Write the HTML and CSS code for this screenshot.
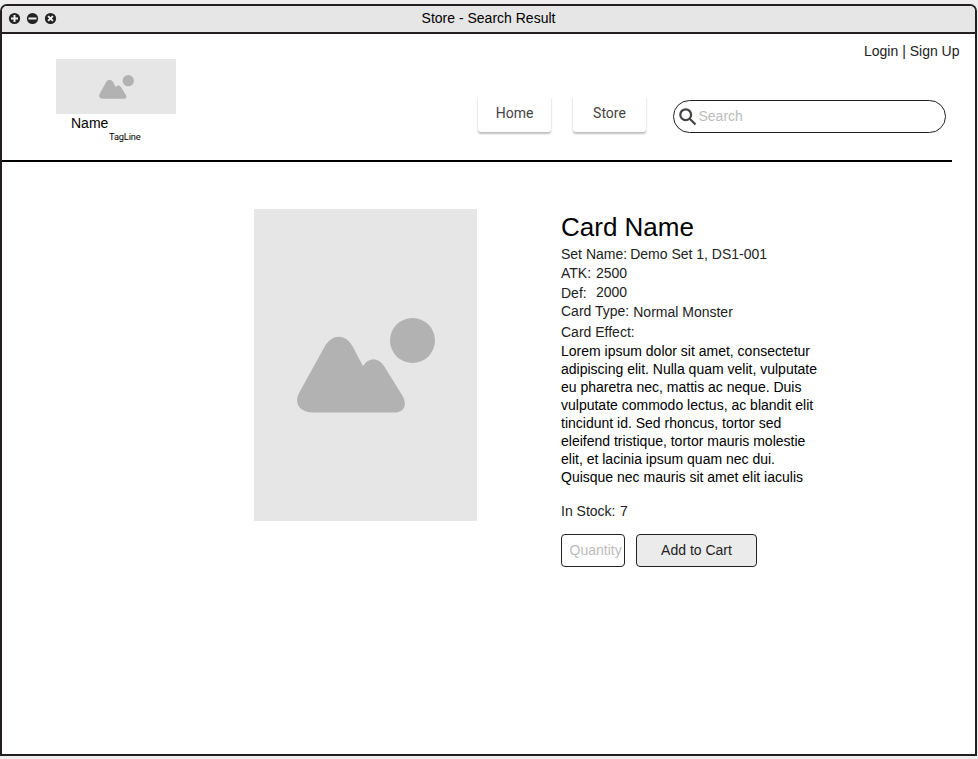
FILE: index.html
```
<!DOCTYPE html>
<html lang="en">
<head>
<meta charset="utf-8">
<title>Store - Search Result</title>
<link rel="stylesheet" href="styles.css">
</head>
<body>
<svg width="0" height="0" class="defs" aria-hidden="true">
  <symbol id="picture" viewBox="0 0 138 95">
    <path d="M28 28C36 15 49 16 56 29Q61 39 66 48C72 39 81 39 87 48L105 77C111 87 107 94.500 97 94.500H16C2 94.500-3 85 2 75Z"/>
    <circle cx="115.500" cy="22.500" r="22.500"/>
  </symbol>
</svg>
<div class="window">
  <header class="titlebar">
    <div class="controls">
      <svg viewBox="0 0 11 11"><circle cx="5.500" cy="5.500" r="5.600"/><path d="M5.500 2v7M2 5.500h7"/></svg>
      <svg viewBox="0 0 11 11"><circle cx="5.500" cy="5.500" r="5.600"/><path d="M1.500 5.500h8"/></svg>
      <svg viewBox="0 0 11 11"><circle cx="5.500" cy="5.500" r="5.600"/><path d="M3.100 3.100l4.800 4.800M7.900 3.100L3.100 7.900"/></svg>
    </div>
    <h1>Store - Search Result</h1>
  </header>
  <div class="site-header">
    <div class="brand">
      <div class="logo"><svg><use href="#picture"/></svg></div>
      <div class="name">Name</div>
      <div class="tagline">TagLine</div>
    </div>
    <div class="right">
      <div class="account">Login | Sign Up</div>
      <nav>
        <a>Home</a>
        <a>Store</a>
        <div class="search">
          <svg viewBox="0 0 18 18"><circle cx="6.700" cy="6.700" r="5.400"/><path d="M10.700 10.700L16.500 16.500"/></svg>
          <span>Search</span>
        </div>
      </nav>
    </div>
  </div>
  <main>
    <div class="card-image"><svg><use href="#picture"/></svg></div>
    <section class="details">
      <h2>Card Name</h2>
      <dl>
        <div class="row set"><dt>Set Name:</dt><dd>Demo Set 1, DS1-001</dd></div>
        <div class="row atk"><dt>ATK:</dt><dd>2500</dd></div>
        <div class="row def"><dt>Def:</dt><dd>2000</dd></div>
        <div class="row type"><dt>Card Type:</dt><dd>Normal Monster</dd></div>
        <div class="row effect"><dt>Card Effect:</dt></div>
      </dl>
      <p>Lorem ipsum dolor sit amet, consectetur<br>adipiscing elit. Nulla quam velit, vulputate<br>eu pharetra nec, mattis ac neque. Duis<br>vulputate commodo lectus, ac blandit elit<br>tincidunt id. Sed rhoncus, tortor sed<br>eleifend tristique, tortor mauris molestie<br>elit, et lacinia ipsum quam nec dui.<br>Quisque nec mauris sit amet elit iaculis</p>
      <div class="row stock"><span>In Stock:</span><span>7</span></div>
      <div class="purchase">
        <div class="quantity">Quantity</div>
        <div class="add">Add to Cart</div>
      </div>
    </section>
  </main>
</div>
</body>
</html>
```
FILE: styles.css
```
* { box-sizing: border-box; }
body {
  margin: 0;
  padding-top: 4px;
  height: 759px;
  overflow: hidden;
  background: #eee;
  color: #222;
  font: 14px/18px "Liberation Sans", Arial, sans-serif;
}
h1, h2, p, dl, dd { margin: 0; font-weight: normal; }
svg { display: block; }
.defs { position: absolute; }
.window {
  width: 977px;
  height: 752px;
  border: 2px solid #231f20;
  border-radius: 7px 7px 0 0;
  background: #fff;
  overflow: hidden;
}
.titlebar {
  display: grid;
  grid-template-columns: 1fr auto 1fr;
  height: 28px;
  background: #e6e6e6;
  border-bottom: 2px solid #231f20;
}
.controls { display: flex; gap: 7px; padding: 7px 0 0 7px; }
.controls svg { width: 11px; height: 11px; fill: #222; overflow: visible; }
.controls path { stroke: #eee; stroke-width: 2; fill: none; }
h1 { font-size: 14px; line-height: 18px; padding-top: 3px; color: #000; }
.site-header {
  display: flex;
  justify-content: space-between;
  width: 950px;
  height: 128px;
  border-bottom: 2px solid #000;
}
.brand { width: 120px; margin: 25px 0 0 54px; color: #000; }
.logo {
  height: 55px;
  background: #e6e6e6;
  display: flex;
  align-items: center;
  justify-content: center;
}
.logo svg { width: 35px; height: 24px; fill: #b2b2b2; }
.name { padding-left: 15px; }
.tagline {
  padding-left: 53px;
  font: 9.3px/10px Roboto, sans-serif;
  letter-spacing: -0.15px;
}
.right { display: flex; flex-direction: column; }
.account { align-self: flex-end; margin: 8px -7.5px 0 0; white-space: nowrap; }
nav { display: flex; margin: 35px 6px 0 0; }
nav a {
  width: 73px;
  height: 37px;
  margin-right: 22px;
  padding-top: 9px;
  text-align: center;
  font: 14px/18px Roboto, sans-serif;
  color: #444;
  background: #fff;
  border-radius: 3px;
  box-shadow: 0 2px 2px rgba(0, 0, 0, .25), 0 0 1px rgba(0, 0, 0, .12);
  clip-path: inset(2px -4px -5px -4px);
}
.search {
  display: flex;
  width: 273px;
  height: 33px;
  margin: 5px 0 0 5px;
  padding: 6px 0 0 5px;
  border: 1px solid #222;
  border-radius: 17px;
  color: #bcbcbc;
}
.search svg {
  width: 18px;
  height: 18px;
  margin: 1px 1.5px 0 0;
  fill: none;
  stroke: #444;
  stroke-width: 2.200;
}
main { display: flex; padding: 47px 0 0 252px; }
.card-image {
  width: 223px;
  height: 312px;
  background: #e6e6e6;
  display: flex;
  align-items: center;
  justify-content: center;
}
.card-image svg { width: 138px; height: 95px; fill: #b2b2b2; }
.details { width: 270px; margin: 3px 0 0 84px; }
h2 { font-size: 26px; line-height: 30px; color: #000; }
dl { padding-top: 3px; }
.row { display: flex; height: 18px; white-space: nowrap; }
.set { gap: 3px; }
.type { gap: 4px; }
.atk { margin-top: 1px; }
.atk dt, .def dt { width: 35px; }
.def { margin-top: 1px; }
.def dt { padding-top: 1px; }
.type { margin-top: 1px; }
.type dd { padding-top: 1px; }
.effect { margin-top: 3px; }
p { margin-top: 1px; color: #000; white-space: nowrap; }
.stock { margin-top: 16px; gap: 4.5px; }
.purchase { display: flex; gap: 11px; margin-top: 14px; }
.quantity, .add {
  height: 33px;
  border: 1px solid #222;
  border-radius: 4px;
  line-height: 31px;
}
.quantity { width: 64px; padding-left: 7.5px; color: #bcbcbc; }
.add { width: 121px; text-align: center; background: #ebebeb; }
```
